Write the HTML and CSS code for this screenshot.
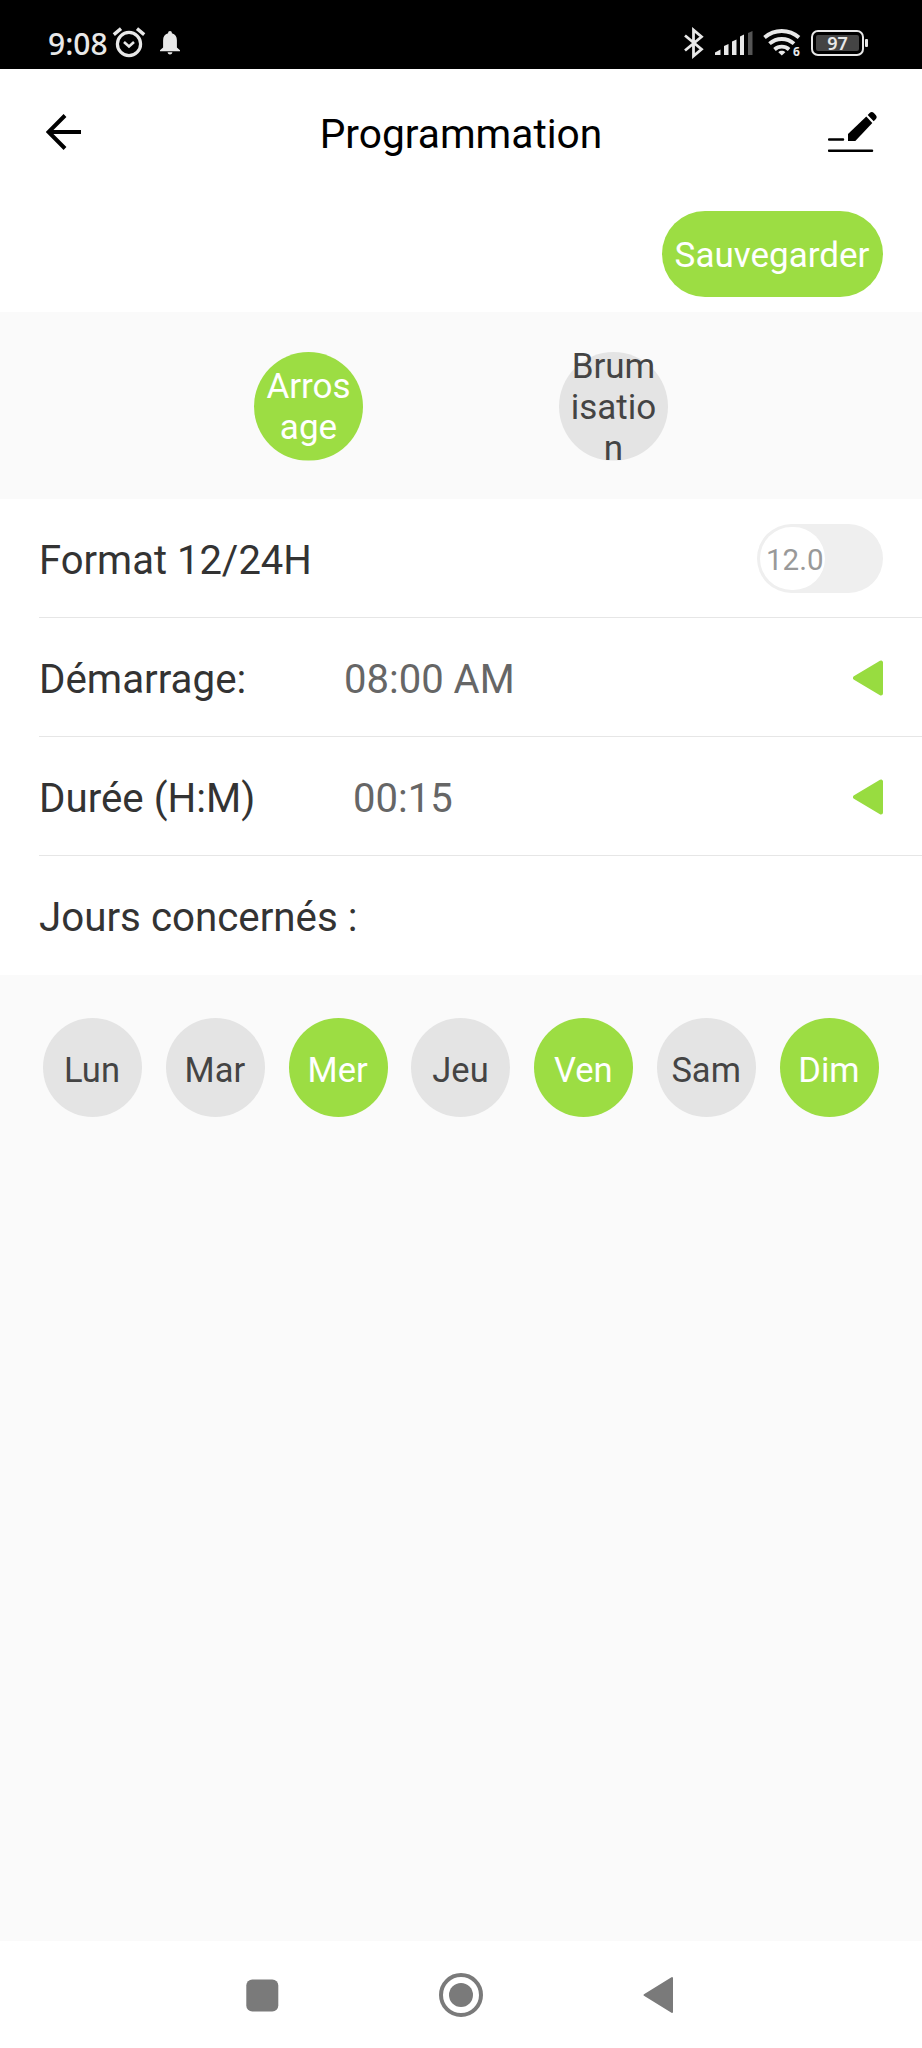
FILE: index.html
```html
<!DOCTYPE html>
<html lang="fr">
<head>
    <meta charset="UTF-8">
    <meta name="viewport" content="width=device-width, initial-scale=1.0">
    <title>Programmation</title>
    <link rel="stylesheet" href="styles.css">
</head>
<body>
    <div class="status-bar">
        <div class="status-left">
            <span class="time">9:08</span>
            <svg class="alarm" width="34" height="32" viewBox="0 0 34 32" fill="none" stroke="#e8e8e8">
                <circle cx="17" cy="18" r="11.6" stroke-width="3.2"/>
                <path d="M12 16l5 4.5 5-4.5" stroke-width="2.6"/>
                <path d="M1.8 8.6l7.2-6M32.2 8.6l-7.2-6" stroke-width="3.4"/>
            </svg>
            <svg class="bell" width="20" height="24" viewBox="0 0 20 24" fill="#e8e8e8">
                <path d="M10 0c1.2 0 1.9.8 1.9 2.2 3.4.9 5 3.6 5 7v7.3l3.1 2.7v1H0v-1l3.1-2.7V9.2c0-3.4 1.6-6.1 5-7C8.1.8 8.8 0 10 0zM7.6 21.300h4.8c-.3 1.5-1.1 2.2-2.4 2.2s-2.1-.7-2.4-2.2z"/>
            </svg>
        </div>
        <div class="status-right">
            <svg width="20" height="32" viewBox="0 0 20 32" fill="none" stroke="#e8e8e8" stroke-width="2.8">
                <path d="M1 8.500l16.500 13.700L9.500 29V3l8 6.800L1 23.500"/>
            </svg>
            <svg class="signal" width="38" height="26" viewBox="0 0 38 26" fill="#e8e8e8">
                <path d="M0 25v-2.500l5.500-3V25zM9 25V16l4.500-2v11zM17 25V11.500l4.500-2V25zM25 25V6.500l4-2V25z"/>
                <path d="M33 25V3l4.500-2v24z" fill="#555"/>
            </svg>
            <svg class="wifi" width="42" height="32" viewBox="0 0 42 32" fill="none" stroke="#e8e8e8" stroke-width="3.8">
                <path d="M1.500 10.500c9.800-8.700 24.700-8.700 34.500 0M6.500 16.700c7-6.300 17.500-6.300 24.500 0M11.500 22.500c4.300-3.800 10.300-3.800 14.600 0"/>
                <path d="M18.800 28.600l-3.500-3.400c1.800-1.800 5.200-1.800 7 0z" fill="#e8e8e8" stroke="none"/>
                <text class="wifi-gen" x="30" y="29">6</text>
            </svg>
            <div class="battery"><span>97</span></div>
        </div>
    </div>

    <header class="header">
        <svg width="36" height="38" viewBox="0 0 36 38" fill="none" stroke="#000" stroke-width="4">
            <path d="M35 19H3M19 2.500L2.500 19 19 35.500"/>
        </svg>
        <h1>Programmation</h1>
        <svg width="50" height="42" viewBox="0 0 50 42">
            <path d="M1 28.500h14M1 39.700h43" stroke="#000" stroke-width="2.5" stroke-linecap="round"/>
            <path d="M20 30v-7L38.300 5.500l6 6.500-17 18z"/>
            <path d="M39.700 4l2.200-2.300c1.200-1.200 2.800-1 4 .3l1.800 2c1.200 1.200 1.300 2.700.2 3.900l-2.200 2.400z"/>
        </svg>
    </header>

    <div class="actions">
        <button class="save">Sauvegarder</button>
    </div>

    <div class="modes">
        <div class="mode active"><span>Arros<br>age</span></div>
        <div class="mode"><span>Brum<br>isatio<br>n</span></div>
    </div>

    <div class="settings">
        <div class="row">
            <span class="label label-format">Format 12/24H</span>
            <div class="toggle"><div class="knob">12.0</div></div>
        </div>
        <div class="row">
            <span class="label label-start">Démarrage:</span>
            <span class="value">08:00 AM</span>
            <svg class="arrow" width="30" height="36" viewBox="0 0 30 36">
                <path d="M2 18L28 2.500v31z"/>
            </svg>
        </div>
        <div class="row">
            <span class="label label-duration">Durée (H:M)</span>
            <span class="value">00:15</span>
            <svg class="arrow" width="30" height="36" viewBox="0 0 30 36">
                <path d="M2 18L28 2.500v31z"/>
            </svg>
        </div>
        <div class="row">
            <span class="label">Jours concernés :</span>
        </div>
    </div>

    <div class="days">
        <div class="day">Lun</div>
        <div class="day">Mar</div>
        <div class="day active">Mer</div>
        <div class="day">Jeu</div>
        <div class="day active">Ven</div>
        <div class="day">Sam</div>
        <div class="day active">Dim</div>
    </div>

    <div class="nav-bar">
        <svg width="33" height="33" viewBox="0 0 33 33" fill="#7a7a7a">
            <rect x=".3" y=".5" width="32" height="32" rx="6"/>
        </svg>
        <svg width="44" height="44" viewBox="0 0 44 44">
            <circle cx="22" cy="22" r="20" fill="none" stroke="#7a7a7a" stroke-width="4"/>
            <circle cx="22" cy="22" r="12" fill="#7a7a7a"/>
        </svg>
        <svg width="30" height="38" viewBox="0 0 30 38" fill="#7a7a7a" stroke="#7a7a7a" stroke-width="2" stroke-linejoin="round">
            <path d="M1.500 19L29 2v34z"/>
        </svg>
    </div>
</body>
</html>
```
FILE: styles.css
```css
* {
    box-sizing: border-box;
}
body {
    margin: 0;
    height: 2048px;
    display: flex;
    flex-direction: column;
    background-color: #fafafa;
    font-family: Roboto, sans-serif;
    color: #333;
}
svg {
    display: block;
    flex-shrink: 0;
}
.status-bar {
    height: 69px;
    padding: 18px 58px 0 48px;
    display: flex;
    justify-content: space-between;
    background-color: #000;
    color: #e8e8e8;
    font-family: "Noto Sans", sans-serif;
}
.status-left,
.status-right {
    display: flex;
    align-items: center;
    height: 51px;
}
.status-left {
    padding-bottom: 2px;
}
.time {
    padding-top: 1px;
    font-size: 30px;
    font-weight: 500;
    line-height: 51px;
}
.alarm {
    margin-left: 4px;
    margin-bottom: 2px;
}
.bell {
    margin-left: 14px;
}
.status-right {
    padding-bottom: 1px;
}
.signal {
    margin-left: 11px;
}
.wifi {
    margin-left: 10px;
}
.wifi-gen {
    font-size: 12px;
    font-weight: bold;
    fill: #e8e8e8;
    stroke: none;
}
.battery {
    position: relative;
    width: 53px;
    height: 26px;
    margin-left: 6px;
    padding: 3px;
    border: 2px solid #e8e8e8;
    border-radius: 7px;
}
.battery span {
    display: block;
    height: 16px;
    background-color: #444;
    border-radius: 2px;
    font-size: 18px;
    font-weight: 600;
    line-height: 16px;
    text-align: center;
}
.battery::after {
    content: "";
    position: absolute;
    right: -6px;
    top: 7px;
    width: 3px;
    height: 8px;
    border-radius: 1px;
    background-color: #e8e8e8;
}
.header {
    height: 126px;
    padding: 0 44px 0 46px;
    display: flex;
    align-items: center;
    justify-content: space-between;
    background-color: #fff;
}
.header h1 {
    margin: 3px 0 0 12px;
    font-size: 40.7px;
    font-weight: 400;
    color: #000;
}
.actions {
    height: 117px;
    padding: 16px 39px 0 0;
    display: flex;
    justify-content: flex-end;
    align-items: flex-start;
    background-color: #fff;
}
.save {
    width: 221px;
    height: 86px;
    padding: 3px 1px 0 0;
    border: none;
    border-radius: 43px;
    background-color: #9cdd43;
    color: #fff;
    font-family: inherit;
    font-size: 35px;
}
.modes {
    height: 187px;
    padding-top: 1px;
    display: flex;
    justify-content: center;
    align-items: center;
    gap: 196px;
}
/* the label is cut at the box, not at the round edge */
.mode {
    width: 109px;
    height: 109px;
    display: flex;
    align-items: center;
    justify-content: center;
    border-radius: 50%;
    background-color: #e4e4e4;
    clip-path: inset(0);
    color: #444;
    font-size: 35px;
    line-height: 41px;
    text-align: center;
}
.mode span {
    padding-top: 2px;
}
.mode.active,
.day.active {
    background-color: #9cdd43;
    color: #fff;
}
.settings {
    background-color: #fff;
}
.row {
    height: 119px;
    padding: 0 39px;
    display: flex;
    align-items: center;
    background: linear-gradient(#e6e6e6, #e6e6e6) 39px 100% / 100% 1.5px no-repeat;
}
.row:last-child {
    background: none;
}
.label,
.value {
    padding-top: 4px;
    font-size: 40.3px;
    white-space: nowrap;
}
.label-format {
    font-size: 40px;
}
.label-start {
    width: 305px;
}
.label-duration {
    width: 314px;
}
.value {
    font-size: 40px;
    color: #666;
}
.toggle {
    width: 126px;
    height: 69px;
    margin-left: auto;
    padding: 3px;
    border-radius: 35px;
    background-color: #efefef;
}
.knob {
    width: 65px;
    height: 63px;
    padding-left: 6px;
    border-radius: 32px;
    background-color: #fff;
    color: #999;
    font-size: 29.5px;
    line-height: 66px;
}
.arrow {
    margin-left: auto;
    fill: #98dc40;
    stroke: #98dc40;
    stroke-width: 4;
    stroke-linejoin: round;
}
.days {
    padding: 43px 43px 0;
    display: flex;
    justify-content: space-between;
}
.day {
    width: 99px;
    height: 99px;
    padding: 5px 1px 0 0;
    display: flex;
    align-items: center;
    justify-content: center;
    border-radius: 50%;
    background-color: #e4e4e4;
    color: #444;
    font-size: 34.5px;
}
.nav-bar {
    height: 107px;
    margin-top: auto;
    padding: 1px 249px 0 246px;
    display: flex;
    align-items: center;
    justify-content: space-between;
    background-color: #fff;
}
```
